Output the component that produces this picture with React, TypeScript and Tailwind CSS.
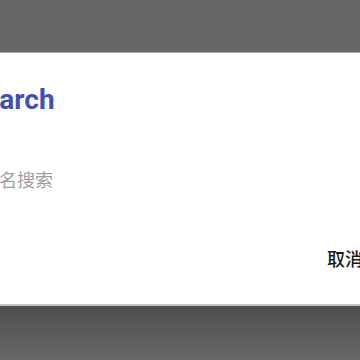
export default function App() {
  return (
    <div className="flex h-[360px] w-[360px] flex-col overflow-hidden bg-[#666666] font-['Roboto','Noto_Sans_CJK_SC',sans-serif]">
      {/* dimmed app bar behind the dialog */}
      <div className="h-[53px] shrink-0 border-b border-[#a8a8a8] bg-[#676767]" />

      {/* dialog body, wider than the viewport */}
      <div className="flex h-[251px] shrink-0 flex-col bg-white">
        <div className="-ml-[33px] mt-[31px] whitespace-nowrap text-[28px] font-bold leading-[32px] text-[#3f51b5]">
          Search
        </div>
        <div className="-ml-[37px] mt-[53px] whitespace-nowrap text-[18px] leading-[24px] text-[#9e9e9e]">
          按书名搜索
        </div>
        <div className="mt-[55px] flex justify-end">
          <span className="-mr-[3px] whitespace-nowrap text-[18px] font-medium leading-[24px] text-[#1a1a1a]">
            取消
          </span>
        </div>
      </div>

      {/* dialog shadow fading into the scrim */}
      <div className="h-[2px] shrink-0 bg-[#c4c4c4]" />
      <div className="flex-1 bg-gradient-to-b from-[#4f4f4f] to-[#676767]" />
    </div>
  )
}
